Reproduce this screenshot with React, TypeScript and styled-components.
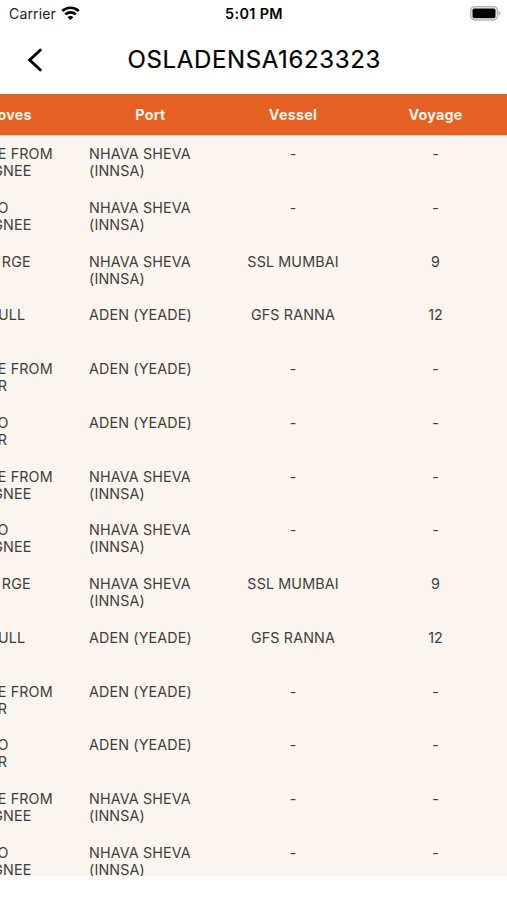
import React from "react";
import styled, { createGlobalStyle } from "styled-components";

const GlobalStyle = createGlobalStyle`
  html, body { margin: 0; padding: 0; background: #fff; overflow: hidden; }
  *, *::before, *::after { box-sizing: border-box; }
`;

const Screen = styled.div`
  display: flex;
  flex-direction: column;
  width: 507px;
  height: 900px;
  overflow: hidden;
  background: #fff;
  color: #000;
  font-family: Inter, "Liberation Sans", sans-serif;
`;

const StatusBar = styled.div`
  display: grid;
  grid-template-columns: 1fr auto 1fr;
  align-items: center;
  flex: none;
  height: 27px;
  padding: 0 6px 0 9px;
`;

const Carrier = styled.div`
  display: flex;
  align-items: center;
  gap: 5px;
  font-size: 14px;
  line-height: 27px;
  letter-spacing: 0.15px;
  color: #222;
`;

const Clock = styled.div`
  margin: 0 1px 0 -1px;
  font-size: 14.4px;
  line-height: 27px;
  font-weight: 600;
  letter-spacing: 0.35px;
`;

const BatterySlot = styled.div`
  display: flex;
  justify-content: flex-end;
`;

const NavBar = styled.header`
  display: grid;
  grid-template-columns: 60px 1fr 60px;
  align-items: center;
  flex: none;
  height: 67px;
  padding-bottom: 2px;
`;

const BackButton = styled.button`
  display: flex;
  align-items: center;
  width: 60px;
  height: 44px;
  margin: 0;
  padding: 0 0 0 26px;
  border: 0;
  background: none;
`;

const Title = styled.h1`
  margin: 0;
  padding: 1px 0 0 1.5px;
  font-size: 24px;
  line-height: 30px;
  font-weight: 400;
  letter-spacing: 0.64px;
  text-align: center;
  white-space: nowrap;
  -webkit-text-stroke: 0.2px #000;
`;

const TableViewport = styled.div`
  display: flex;
  flex-direction: column;
  flex: none;
  width: 507px;
  height: 782px;
  overflow: hidden;
  background: #faf5ee;
`;

const TableHead = styled.div`
  display: grid;
  grid-template-columns: repeat(4, 142.6px);
  align-items: center;
  flex: none;
  height: 42px;
  margin-left: -63.5px;
  width: 570.5px;
  background: #e46123;
  border-bottom: 1px solid #fbbf95;
`;

const HeadCell = styled.div`
  color: #fff4ea;
  font-size: 14.3px;
  line-height: 18px;
  font-weight: 700;
  letter-spacing: 0.25px;
  text-align: center;
`;

const TableRow = styled.div`
  display: grid;
  grid-template-columns: repeat(4, 142.6px);
  flex: none;
  height: 53.76px;
  margin-left: -63.5px;
  padding-top: 9px;
`;

const Cell = styled.div<{ $center?: boolean }>`
  padding: 0 10px;
  color: #403d3a;
  font-size: 14.3px;
  line-height: 17.2px;
  letter-spacing: 0.13px;
  text-align: ${(p) => (p.$center ? "center" : "left")};
  white-space: nowrap;
`;

const Line = styled.div<{ $width?: number }>`
  ${(p) => (p.$width ? `width: ${p.$width}px; display: flex; justify-content: flex-end;` : "")}
  white-space: pre;
`;

type TextLine = [text: string, width: number];
interface Move {
  move: TextLine[];
  port: string[];
  vessel: string;
  voyage: string;
}

const CONSIGNEE: TextLine = ["CONSIGNEE", 84.9];
const SHIPPER: TextLine = ["SHIPPER", 60.7];
const FROM: TextLine = ["MOVE FROM", 106.2];
const TO: TextLine = ["MOVE TO", 62.2];
const NHAVA = ["NHAVA SHEVA", "(INNSA)"];
const ADEN = ["ADEN (YEADE)"];

const cycle: Move[] = [
  { move: [FROM, CONSIGNEE], port: NHAVA, vessel: "-", voyage: "-" },
  { move: [TO, CONSIGNEE], port: NHAVA, vessel: "-", voyage: "-" },
  { move: [["DISCHA RGE", 84.2]], port: NHAVA, vessel: "SSL MUMBAI", voyage: "9" },
  { move: [["LOAD FULL", 78.7]], port: ADEN, vessel: "GFS RANNA", voyage: "12" },
  { move: [FROM, SHIPPER], port: ADEN, vessel: "-", voyage: "-" },
  { move: [TO, SHIPPER], port: ADEN, vessel: "-", voyage: "-" },
];
const moves = [...cycle, ...cycle, ...cycle.slice(0, 2)];

const WifiIcon = () => (
  <svg width="19" height="15" viewBox="0 0 19 15" fill="none" stroke="#000" strokeWidth="2.6">
    <path d="M1.2 5C5.8 .7 13.2 .7 17.8 5" />
    <path d="M4.2 8.4C7.2 5.7 11.8 5.7 14.8 8.4" />
    <path d="M6.6 11.2C8.3 9.6 10.7 9.6 12.4 11.2L9.5 14Z" fill="#000" stroke="none" />
  </svg>
);

const BatteryIcon = () => (
  <svg width="31" height="15" viewBox="0 0 31 15">
    <rect x=".8" y=".7" width="26.6" height="13.2" rx="3.8" fill="#fff" stroke="#b5b5b5" strokeWidth="1.5" />
    <rect x="2.5" y="2.6" width="23" height="9.6" rx="1.6" fill="#000" />
    <path d="M28.7 5C30.8 5.7 30.8 9 28.7 9.7Z" fill="#aaa" />
  </svg>
);

const BackIcon = () => (
  <svg width="18" height="26" viewBox="0 0 18 26" fill="none" stroke="#000" strokeWidth="2.9">
    <path d="M15.2 2.3L3.7 13L15.2 23.7" />
  </svg>
);

export default function App() {
  return (
    <>
      <GlobalStyle />
      <Screen>
        <StatusBar>
          <Carrier>
            Carrier
            <WifiIcon />
          </Carrier>
          <Clock>5:01 PM</Clock>
          <BatterySlot>
            <BatteryIcon />
          </BatterySlot>
        </StatusBar>
        <NavBar>
          <BackButton aria-label="Back">
            <BackIcon />
          </BackButton>
          <Title>OSLADENSA1623323</Title>
        </NavBar>
        <TableViewport>
          <TableHead>
            {["Moves", "Port", "Vessel", "Voyage"].map((label) => (
              <HeadCell key={label}>{label}</HeadCell>
            ))}
          </TableHead>
          {moves.map((row, i) => (
            <TableRow key={i}>
              <Cell>
                {row.move.map(([text, width]) => (
                  <Line key={text} $width={width}>{text}</Line>
                ))}
              </Cell>
              <Cell>
                {row.port.map((text) => (
                  <Line key={text}>{text}</Line>
                ))}
              </Cell>
              <Cell $center>{row.vessel}</Cell>
              <Cell $center>{row.voyage}</Cell>
            </TableRow>
          ))}
        </TableViewport>
      </Screen>
    </>
  );
}
